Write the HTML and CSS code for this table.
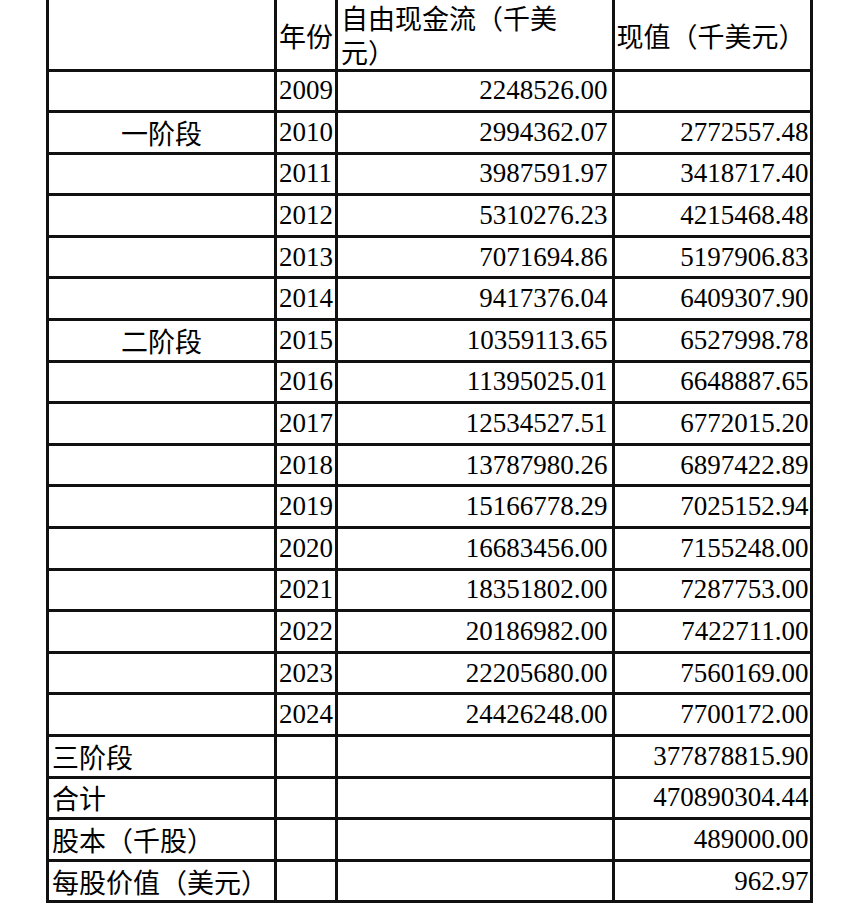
FILE: index.html
```html
<!DOCTYPE html>
<html lang="zh">
<head>
<meta charset="utf-8">
<link rel="stylesheet" href="styles.css">
</head>
<body>
<div class="sheet">
  <div class="cell head"></div>
  <div class="cell head left">年份</div>
  <div class="cell head left wrap">自由现金流（千美元）</div>
  <div class="cell head left">现值（千美元）</div>

  <div class="cell"></div><div class="cell year">2009</div><div class="cell num c3">2248526.00</div><div class="cell num c4"></div>
  <div class="cell center">一阶段</div><div class="cell year">2010</div><div class="cell num c3">2994362.07</div><div class="cell num c4">2772557.48</div>
  <div class="cell"></div><div class="cell year">2011</div><div class="cell num c3">3987591.97</div><div class="cell num c4">3418717.40</div>
  <div class="cell"></div><div class="cell year">2012</div><div class="cell num c3">5310276.23</div><div class="cell num c4">4215468.48</div>
  <div class="cell"></div><div class="cell year">2013</div><div class="cell num c3">7071694.86</div><div class="cell num c4">5197906.83</div>
  <div class="cell"></div><div class="cell year">2014</div><div class="cell num c3">9417376.04</div><div class="cell num c4">6409307.90</div>
  <div class="cell center">二阶段</div><div class="cell year">2015</div><div class="cell num c3">10359113.65</div><div class="cell num c4">6527998.78</div>
  <div class="cell"></div><div class="cell year">2016</div><div class="cell num c3">11395025.01</div><div class="cell num c4">6648887.65</div>
  <div class="cell"></div><div class="cell year">2017</div><div class="cell num c3">12534527.51</div><div class="cell num c4">6772015.20</div>
  <div class="cell"></div><div class="cell year">2018</div><div class="cell num c3">13787980.26</div><div class="cell num c4">6897422.89</div>
  <div class="cell"></div><div class="cell year">2019</div><div class="cell num c3">15166778.29</div><div class="cell num c4">7025152.94</div>
  <div class="cell"></div><div class="cell year">2020</div><div class="cell num c3">16683456.00</div><div class="cell num c4">7155248.00</div>
  <div class="cell"></div><div class="cell year">2021</div><div class="cell num c3">18351802.00</div><div class="cell num c4">7287753.00</div>
  <div class="cell"></div><div class="cell year">2022</div><div class="cell num c3">20186982.00</div><div class="cell num c4">7422711.00</div>
  <div class="cell"></div><div class="cell year">2023</div><div class="cell num c3">22205680.00</div><div class="cell num c4">7560169.00</div>
  <div class="cell"></div><div class="cell year">2024</div><div class="cell num c3">24426248.00</div><div class="cell num c4">7700172.00</div>

  <div class="cell label">三阶段</div><div class="cell"></div><div class="cell"></div><div class="cell num c4">377878815.90</div>
  <div class="cell label">合计</div><div class="cell"></div><div class="cell"></div><div class="cell num c4">470890304.44</div>
  <div class="cell label">股本（千股）</div><div class="cell"></div><div class="cell"></div><div class="cell num c4">489000.00</div>
  <div class="cell label">每股价值（美元）</div><div class="cell"></div><div class="cell"></div><div class="cell num c4">962.97</div>
</div>
</body>
</html>
```

FILE: styles.css
```css
html, body {
  margin: 0;
  padding: 0;
  background: #fff;
}

body {
  font-family: "Liberation Serif", "Noto Sans CJK SC", serif;
  font-size: 27px;
  color: #000;
}

.sheet {
  display: grid;
  grid-template-columns: 225px 58px 273.5px 195px;
  grid-template-rows: 68.5px repeat(20, 38.6px);
  gap: 3px;
  padding: 3px;
  background: #111;
  width: max-content;
  margin: -3px 0 0 46px;
}

.cell {
  background: #fff;
  display: flex;
  align-items: center;
  white-space: nowrap;
  line-height: 1;
}

.head {
  font-family: "Noto Sans CJK SC", sans-serif;
  padding-top: 3px;
}

.left {
  padding-left: 2px;
}

.wrap {
  align-items: flex-start;
  white-space: normal;
  line-height: 34px;
  padding-top: 1px;
  padding-left: 3px;
  padding-right: 30px;
}

.year {
  padding-left: 2px;
}

.num {
  justify-content: flex-end;
}

.c3 {
  padding-right: 4px;
}

.c4 {
  padding-right: 1px;
}

.center {
  justify-content: center;
  font-family: "Noto Sans CJK SC", sans-serif;
}

.label {
  padding-left: 3px;
  font-family: "Noto Sans CJK SC", sans-serif;
}
```
